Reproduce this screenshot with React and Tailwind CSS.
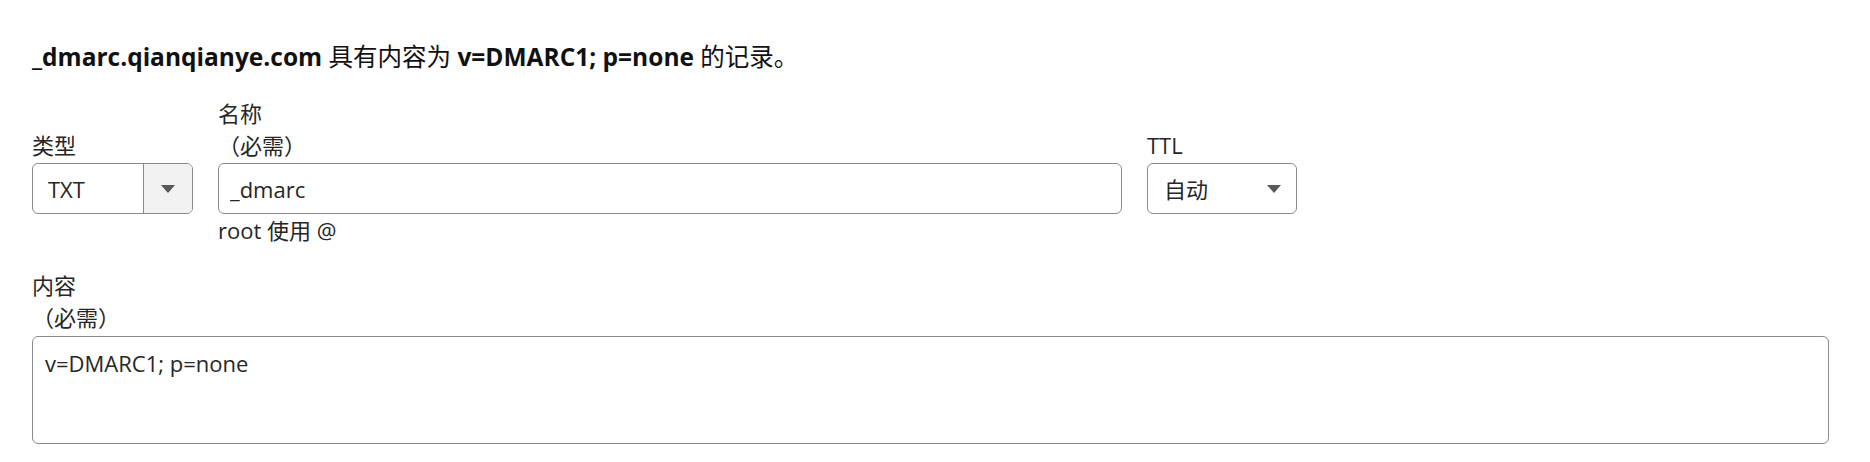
import React from 'react';

const Arrow = () => (
    <svg width="14" height="8" viewBox="0 0 14 8" className="block">
        <path d="M0 0 L14 0 L7 8 Z" fill="#595959" />
    </svg>
);

const FieldLabel = ({ children }) => (
    <div className="min-h-[64px] mb-[2px] flex flex-col justify-end">{children}</div>
);

const App = () => {
    return (
        <div className="min-h-screen bg-white pt-[39px] pl-[32px] pr-[41px] font-['Open_Sans','Noto_Sans_CJK_SC',sans-serif] text-[#262626]">
            <h2 className="text-[24.5px] leading-[36px] text-[#111111] font-normal">
                <strong className="font-bold">_dmarc.qianqianye.com</strong> 具有内容为{' '}
                <strong className="font-bold">v=DMARC1; p=none</strong> 的记录。
            </h2>

            <div className="mt-[22px] flex items-start gap-[25px] text-[22px] leading-[32px]">
                {/* type */}
                <div className="w-[161px]">
                    <FieldLabel>
                        <span>类型</span>
                    </FieldLabel>
                    <div className="flex h-[51px] rounded-[6px] border border-[#8a8a8a] overflow-hidden">
                        <div className="flex-1 flex items-center pl-[15px]">TXT</div>
                        <div className="w-[49px] flex items-center justify-center bg-[#f2f2f2] border-l border-[#8a8a8a]">
                            <Arrow />
                        </div>
                    </div>
                </div>

                {/* name */}
                <div className="w-[904px]">
                    <FieldLabel>
                        <span>名称</span>
                        <span>（必需）</span>
                    </FieldLabel>
                    <input
                        readOnly
                        defaultValue="_dmarc"
                        className="block w-full h-[51px] rounded-[6px] border border-[#8a8a8a] px-[11px] text-[22px] text-[#262626] outline-none"
                    />
                    <div>root 使用 @</div>
                </div>

                {/* ttl */}
                <div className="w-[150px]">
                    <FieldLabel>
                        <span>TTL</span>
                    </FieldLabel>
                    <div className="flex items-center justify-between h-[51px] rounded-[6px] border border-[#8a8a8a] pl-[16px] pr-[15px]">
                        <span>自动</span>
                        <Arrow />
                    </div>
                </div>
            </div>

            <div className="mt-[23px] text-[22px] leading-[32px]">
                <div className="mb-[3px] flex flex-col">
                    <span>内容</span>
                    <span>（必需）</span>
                </div>
                <textarea
                    readOnly
                    defaultValue="v=DMARC1; p=none"
                    className="block w-full h-[108px] rounded-[6px] border border-[#8a8a8a] px-[12px] pt-[10px] text-[22px] leading-[32px] text-[#262626] resize-none outline-none"
                />
            </div>
        </div>
    );
};

export default App;
